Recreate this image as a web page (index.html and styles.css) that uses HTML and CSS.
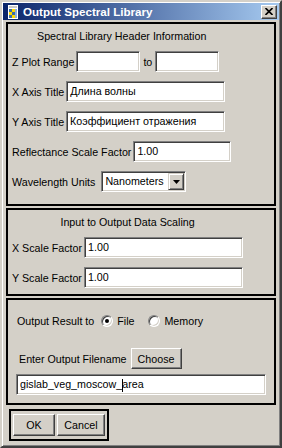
FILE: index.html
```html
<!DOCTYPE html>
<html lang="en">
<head>
    <meta charset="UTF-8">
    <title>Output Spectral Library</title>
    <link rel="stylesheet" href="styles.css">
</head>
<body>
    <div class="win">
        <div class="titlebar">
            <svg class="app-icon" width="14" height="14" viewBox="0 0 14 14">
                <rect x="0" y="0" width="14" height="14" fill="#fff"/>
                <rect x="0" y="0" width="4" height="14" fill="#0a246a"/>
                <rect x="5" y="4" width="3" height="3" fill="#3a6ea5"/>
                <rect x="8" y="4" width="3" height="3" fill="#ffd800"/>
                <rect x="5" y="7" width="3" height="3" fill="#ffd800"/>
                <rect x="8" y="7" width="3" height="3" fill="#3a6ea5"/>
                <rect x="5" y="10" width="3" height="3" fill="#3a6ea5"/>
                <rect x="8" y="10" width="3" height="3" fill="#ffd800"/>
                <rect x="11" y="4" width="2" height="9" fill="#8fb0d8"/>
                <rect x="5" y="1" width="8" height="2" fill="#c8c8c8"/>
            </svg>
            <span class="title">Output Spectral Library</span>
            <span class="close">
                <svg width="8" height="7" viewBox="0 0 8 7"><path d="M0.5 0L7.5 7M7.5 0L0.5 7" stroke="#000" stroke-width="1.6"/></svg>
            </span>
        </div>

        <div class="content">
            <div class="panel p-header">
                <div class="col">
                    <div class="head">Spectral Library Header Information</div>
                    <div class="row">
                        <span>Z Plot Range</span>
                        <div class="field w-range"></div>
                        <span class="to">to</span>
                        <div class="field w-range"></div>
                    </div>
                    <div class="row">
                        <span>X Axis Title</span>
                        <div class="field w-title">Длина волны</div>
                    </div>
                    <div class="row">
                        <span>Y Axis Title</span>
                        <div class="field w-title">Коэффициент отражения</div>
                    </div>
                    <div class="row">
                        <span>Reflectance Scale Factor</span>
                        <div class="field w-refl">1.00</div>
                    </div>
                    <div class="row">
                        <span>Wavelength Units</span>
                        <div class="field select">
                            <span>Nanometers</span>
                            <span class="drop">
                                <svg width="7" height="4" viewBox="0 0 7 4"><path d="M0 0h7L3.5 4z" fill="#000"/></svg>
                            </span>
                        </div>
                    </div>
                </div>
            </div>

            <div class="panel p-scale">
                <div class="col">
                    <div class="head">Input to Output Data Scaling</div>
                    <div class="row">
                        <span>X Scale Factor</span>
                        <div class="field w-scale">1.00</div>
                    </div>
                    <div class="row">
                        <span>Y Scale Factor</span>
                        <div class="field w-scale">1.00</div>
                    </div>
                </div>
            </div>

            <div class="panel p-output">
                <div class="row out-row">
                    <span>Output Result to</span>
                    <label class="opt"><span class="radio checked"></span>File</label>
                    <label class="opt"><span class="radio"></span>Memory</label>
                </div>
                <div class="row file-row">
                    <span>Enter Output Filename</span>
                    <span class="btn btn-choose">Choose</span>
                </div>
                <div class="field w-file">gislab_veg_moscow_<span class="caret"></span>area</div>
            </div>

            <div class="panel p-buttons">
                <span class="btn btn-ok">OK</span>
                <span class="btn btn-cancel">Cancel</span>
            </div>
        </div>
    </div>
</body>
</html>
```

FILE: styles.css
```css
body{margin:0;font-family:"Liberation Sans",Arial,sans-serif;font-size:10.7px;color:#000}

.win{
    width:282px;
    height:448px;
    box-sizing:border-box;
    background:#d4d0c8;
    border:2px solid;
    border-color:#d4d0c8 #404040 #404040 #d4d0c8;
    box-shadow:inset 1px 1px #fff,inset -1px -1px #808080;
    padding:1px;
}

.titlebar{display:flex;align-items:center;height:17px;background:linear-gradient(to right,#0a246a,#a6caf0)}
.app-icon{margin-left:1px;flex:none}
.title{margin-left:5px;color:#fff;font-weight:bold;font-size:11.6px;white-space:nowrap}
.close{
    margin-left:auto;margin-right:2px;
    width:16px;height:14px;box-sizing:border-box;
    display:flex;align-items:center;justify-content:center;
    background:#d4d0c8;
    border:1px solid;border-color:#fff #404040 #404040 #fff;
    box-shadow:inset -1px -1px #808080;
}

.content{padding:2px 3px 0}

.panel{border:2px solid #000}
.panel + .panel{margin-top:2px}

.col{width:max-content;display:flex;flex-direction:column}
.head{line-height:13px;text-align:center;margin-bottom:8px}

.row{display:flex;align-items:center;gap:2px;white-space:nowrap}
.col .row + .row{margin-top:9px}

.field{
    height:21px;box-sizing:border-box;
    background:#fff;
    border:1px solid;border-color:#808080 #fff #fff #808080;
    box-shadow:inset 1px 1px #404040,inset -1px -1px #d4d0c8;
    padding:0 3px;line-height:19px;
    white-space:nowrap;overflow:hidden;
}
.w-range{width:64px}
.w-title{width:159px}
.w-refl{width:98px}
.w-scale{width:159px}
.w-file{width:250px;margin-left:4px}
.to{margin:0 1px}

.select{width:85px;margin-left:4px;display:flex;align-items:center;padding:0 1px 0 3px}
.drop{
    margin-left:auto;width:16px;height:17px;box-sizing:border-box;
    display:flex;align-items:center;justify-content:center;
    background:#d4d0c8;
    border:1px solid;border-color:#d4d0c8 #404040 #404040 #d4d0c8;
    box-shadow:inset 1px 1px #fff,inset -1px -1px #808080;
}

.p-header{padding:6px 4px 12px}
.p-scale{padding:6px 4px 6px}
.p-scale .head{margin-bottom:8px}

.p-output{padding:14px 4px 8px}
.out-row{height:13px;margin-left:5px}
.opt{display:flex;align-items:center;gap:4px}
.out-row .opt:first-of-type{margin-left:5px}
.out-row .opt + .opt{margin-left:12px}
.radio{
    position:relative;
    width:12px;height:12px;box-sizing:border-box;border-radius:50%;
    background:#fff;
    border:1px solid;border-color:#808080 #fff #fff #808080;
    box-shadow:inset 1px 1px #404040,inset -1px -1px #d4d0c8;
}
.radio.checked::after{content:"";position:absolute;left:3px;top:3px;width:4px;height:4px;border-radius:50%;background:#000}

.file-row{margin:21px 0 5px 7px}
.caret{display:inline-block;width:1px;height:13px;background:#000;vertical-align:middle;margin-right:-1px}

.btn{
    display:flex;align-items:center;justify-content:center;
    box-sizing:border-box;
    background:#d4d0c8;
    border:1px solid;border-color:#fff #404040 #404040 #fff;
    box-shadow:inset -1px -1px #808080;
}
.btn-choose{width:51px;height:21px;margin-left:2px}
.btn-ok{width:42px;height:22px}
.btn-cancel{width:48px;height:22px}

.p-buttons{display:flex;gap:2px;width:max-content;margin-left:3px;padding:3px 2px}
.p-buttons.panel{margin-top:4px}
```
